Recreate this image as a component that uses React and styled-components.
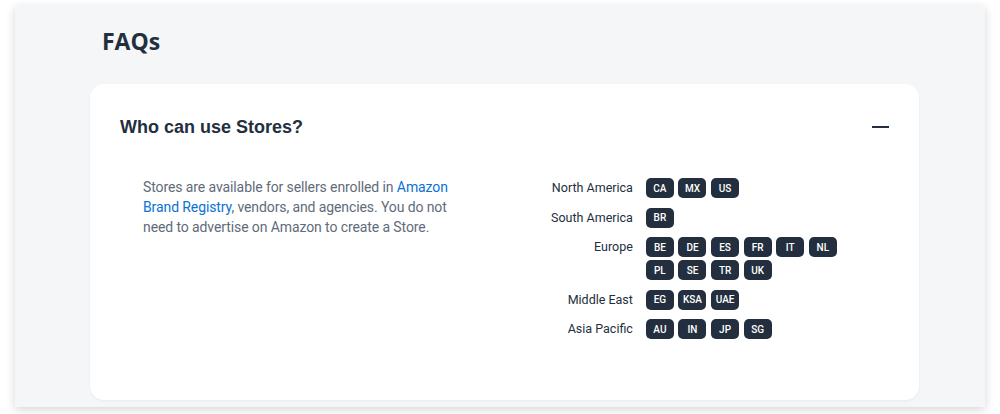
import React from 'react';
import styled, { createGlobalStyle } from 'styled-components'

const GlobalStyle = createGlobalStyle`
     html, body {
          margin:0;
          padding:0;
          background:#ffffff;
     }
     body {
          font-family: Roboto, 'Liberation Sans', sans-serif;
          color:#232f3e;
     }
`

const Page = styled.div`
     padding:5px 15px 7px 15px;
`

const Panel = styled.section`
     background:#f5f6f8;
     height:402px;
     box-sizing:border-box;
     padding:16px 66px 0 75px;
     box-shadow:0 3px 9px rgba(0,0,0,0.16);
`

const Heading = styled.h2`
     margin:0 0 23px 12px;
     font-family:'Open Sans', sans-serif;
     font-size:23px;
     line-height:40px;
     font-weight:700;
     color:#232f3e;
`

const Card = styled.div`
     background:#ffffff;
     border-radius:14px;
     padding:0 30px 61px 30px;
     box-shadow:0 1px 3px rgba(0,0,0,0.05);
`

const CardHeader = styled.div`
     display:flex;
     justify-content:space-between;
     align-items:center;
     height:86px;
`

const Question = styled.h3`
     margin:0;
     font-family:'Liberation Sans', Arial, sans-serif;
     font-size:18px;
     font-weight:700;
     color:#232f3e;
`

const Minus = styled.span`
     display:block;
     width:17px;
     height:2px;
     background:#232f3e;
`

const CardBody = styled.div`
     display:flex;
     align-items:flex-start;
     padding-left:23px;
     padding-top:7px;
`

const Answer = styled.p`
     margin:0;
     width:312px;
     font-size:14px;
     line-height:20px;
     letter-spacing:-0.1px;
     color:#5f6b7a;
     a {
          color:#0972d3;
          text-decoration:none;
     }
`

const Regions = styled.div`
     display:grid;
     grid-template-columns:auto auto;
     column-gap:13px;
     row-gap:9.5px;
     margin-left:96px;
     margin-top:1px;
`

const RegionName = styled.div`
     text-align:right;
     font-size:12.5px;
     line-height:20px;
     color:#232f3e;
`

const Badges = styled.div`
     display:flex;
     flex-wrap:wrap;
     gap:3px 4.6px;
     width:200px;
`

const Badge = styled.span`
     display:inline-flex;
     align-items:center;
     justify-content:center;
     min-width:28px;
     height:20px;
     box-sizing:border-box;
     padding:0 4px;
     border-radius:5px;
     background:#232f3e;
     color:#ffffff;
     font-size:10px;
     font-weight:500;
`

const regions = [
     { name: 'North America', codes: ['CA', 'MX', 'US'] },
     { name: 'South America', codes: ['BR'] },
     { name: 'Europe', codes: ['BE', 'DE', 'ES', 'FR', 'IT', 'NL', 'PL', 'SE', 'TR', 'UK'] },
     { name: 'Middle East', codes: ['EG', 'KSA', 'UAE'] },
     { name: 'Asia Pacific', codes: ['AU', 'IN', 'JP', 'SG'] },
]

const App = () => {
     return (
          <Page>
               <GlobalStyle />
               <Panel>
                    <Heading>FAQs</Heading>
                    <Card>
                         <CardHeader>
                              <Question>Who can use Stores?</Question>
                              <Minus />
                         </CardHeader>
                         <CardBody>
                              <Answer>
                                   Stores are available for sellers enrolled in <a href="#">Amazon Brand Registry</a>, vendors, and agencies. You do not need to advertise on Amazon to create a Store.
                              </Answer>
                              <Regions>
                                   {regions.map(r => (
                                        <React.Fragment key={r.name}>
                                             <RegionName>{r.name}</RegionName>
                                             <Badges>
                                                  {r.codes.map(c => <Badge key={c}>{c}</Badge>)}
                                             </Badges>
                                        </React.Fragment>
                                   ))}
                              </Regions>
                         </CardBody>
                    </Card>
               </Panel>
          </Page>
     )
}

export default App
